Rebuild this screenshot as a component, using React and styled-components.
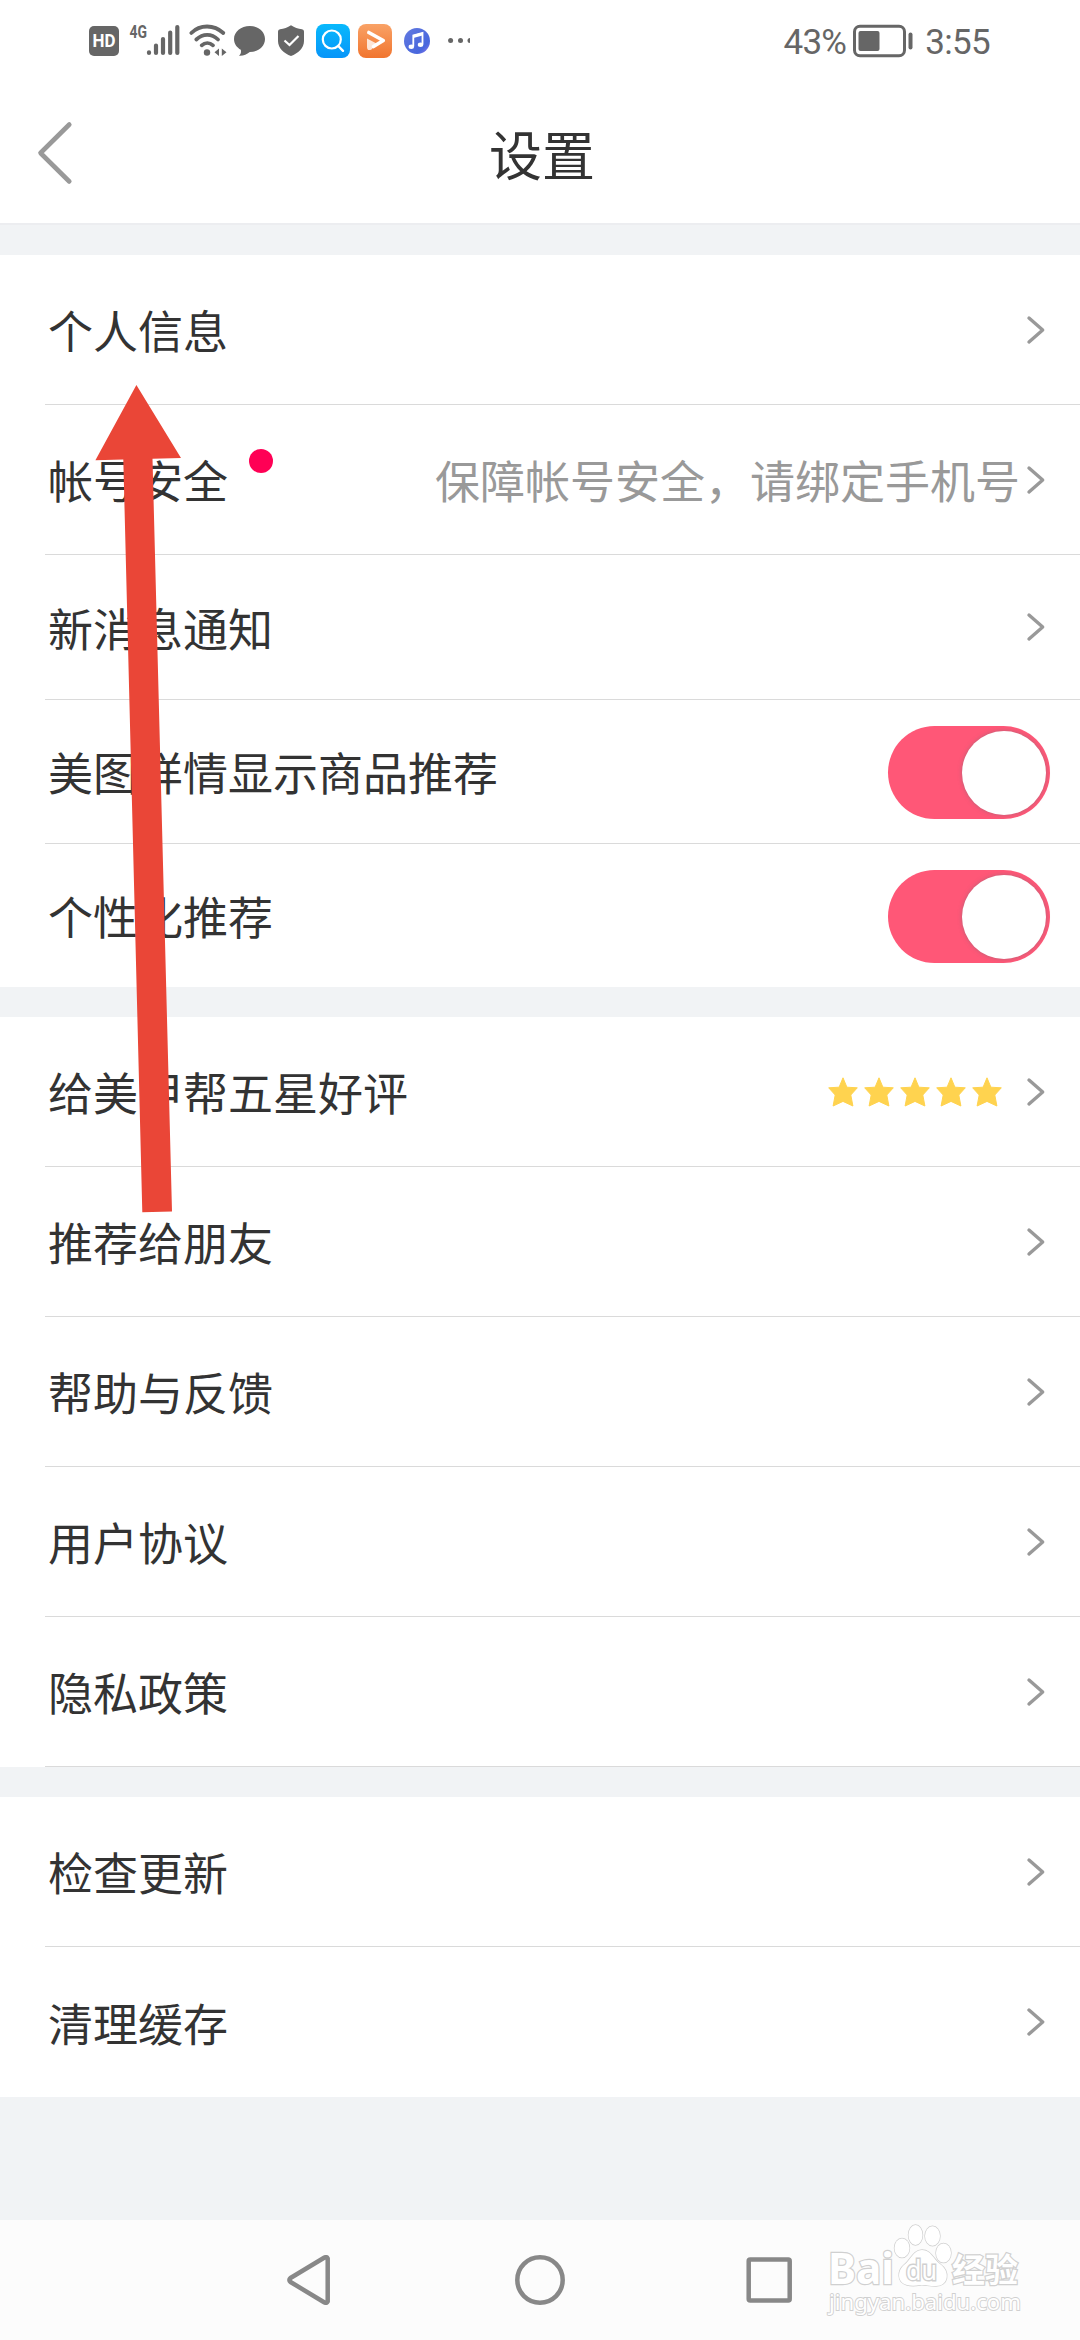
import React, { useState } from 'react';
import styled, { createGlobalStyle } from 'styled-components';

const GlobalStyle = createGlobalStyle`
  * {
    box-sizing: border-box;
  }

  body {
    margin: 0;
    background: #f1f3f5;
    font-family: "Noto Sans CJK SC", sans-serif;
    color: #333;
  }
`;

const Screen = styled.div`
  position: relative;
  display: flex;
  flex-direction: column;
  width: 1080px;
  height: 2340px;
  overflow: hidden;
  background: #f1f3f5;
`;

const StatusBar = styled.div`
  display: flex;
  justify-content: space-between;
  flex: none;
  height: 82px;
  padding: 0 90px 0 89px;
  background: #fff;
  color: #666;
`;

const StatusGroup = styled.div`
  display: flex;
  align-items: center;
  height: 82px;
`;

const StatusIcon = styled.svg`
  display: block;
  flex: none;
  width: ${props => props.width}px;
  height: ${props => props.height || 34}px;
  margin-left: ${props => props.$gap || 0}px;
  overflow: visible;
`;

const StatusText = styled.span`
  font-family: Roboto, sans-serif;
  font-size: 35px;
  line-height: 41px;
  letter-spacing: -0.7px;
  padding-top: 2px;
`;

const Header = styled.header`
  display: grid;
  grid-template-columns: 140px 1fr 140px;
  align-items: center;
  flex: none;
  height: 143px;
  background: #fff;
  border-bottom: 2px solid #ecedf0;
`;

const BackButton = styled.button`
  display: flex;
  padding: 0 0 0 36px;
  border: none;
  background: none;
  cursor: pointer;
`;

const Title = styled.h1`
  margin: 0;
  padding-left: 4px;
  font-size: 53px;
  font-weight: 400;
  line-height: 78px;
  text-align: center;
`;

const List = styled.main`
  display: flex;
  flex-direction: column;
  gap: 30px;
  flex: 1;
  padding-top: 30px;
`;

const Section = styled.section`
  background: #fff;
`;

const Row = styled.div`
  display: flex;
  align-items: center;
  height: ${props => props.$height || 150}px;
  margin-left: 45px;
  padding: 0 30px 0 3px;
  border-bottom: ${props => (props.$divider ? '1px solid #dadada' : 'none')};
`;

const Label = styled.span`
  font-size: 45px;
  line-height: 66px;
  padding-top: 1px;
`;

const RedDot = styled.i`
  width: 24px;
  height: 24px;
  margin: 0 0 37px 21px;
  border-radius: 50%;
  background: #ff0055;
`;

const RowEnd = styled.div`
  display: flex;
  align-items: center;
  margin-left: auto;
`;

const Hint = styled(Label)`
  color: #999;
  margin-right: 6px;
`;

const Stars = styled.div`
  display: flex;
  gap: 6px;
  margin: 1px 24px 0 0;
`;

const ArrowIcon = styled.svg`
  display: block;
  width: 20px;
  height: 30px;
  margin-right: 4px;
`;

const Switch = styled.button`
  display: flex;
  justify-content: ${props => (props.$on ? 'flex-end' : 'flex-start')};
  align-items: center;
  width: 162px;
  height: 93px;
  margin-top: 2px;
  padding: 0 4px;
  border: none;
  border-radius: 47px;
  background: ${props => (props.$on ? '#ff5777' : '#ddd')};
  cursor: pointer;
`;

const Knob = styled.span`
  width: 84px;
  height: 84px;
  border-radius: 50%;
  background: #fff;
  box-shadow: 0 0 4px rgba(120, 110, 120, 0.55);
`;

const NavBar = styled.nav`
  position: relative;
  display: flex;
  justify-content: center;
  align-items: center;
  gap: 180px;
  flex: none;
  height: 120px;
  background: #fcfcfc;
`;

const NavIcon = styled.svg`
  display: block;
  width: 50px;
  height: 50px;
  fill: none;
  stroke: #888;
  stroke-width: 4.5;
  stroke-linejoin: round;
`;

const Watermark = styled.svg`
  position: absolute;
  left: 820px;
  top: 0;
  width: 210px;
  height: 110px;
  font-family: "Noto Sans", "Noto Sans CJK SC", sans-serif;
`;

const Pointer = styled.svg`
  position: absolute;
  left: 90px;
  top: 380px;
  width: 96px;
  height: 840px;
  pointer-events: none;
`;

const sections = [
  [
    { label: '个人信息' },
    { label: '帐号安全', dot: true, hint: '保障帐号安全，请绑定手机号' },
    { label: '新消息通知', height: 145 },
    { label: '美图详情显示商品推荐', height: 144, toggle: true },
    { label: '个性化推荐', height: 143, toggle: true, last: true },
  ],
  [
    { label: '给美甲帮五星好评', stars: 5 },
    { label: '推荐给朋友' },
    { label: '帮助与反馈' },
    { label: '用户协议' },
    { label: '隐私政策' },
  ],
  [{ label: '检查更新' }, { label: '清理缓存', last: true }],
];

function Chevron() {
  return (
    <ArrowIcon viewBox="0 0 20 30" fill="none" stroke="#999" strokeWidth="3.4" strokeLinecap="round">
      <path d="M3 3 16.700 15 3 27" strokeLinejoin="round" />
    </ArrowIcon>
  );
}

function Star() {
  return (
    <svg width="30" height="30" viewBox="0 0 30 30" fill="#ffd34f">
      <path
        d="M15 .8 18.900 10.200 29.300 10.800 22.800 18 24.900 29 15 24.400 5.100 29 7.200 18 .7 10.800 11.100 10.200Z"
        stroke="#ffd34f"
        strokeWidth="1"
        strokeLinejoin="round"
      />
    </svg>
  );
}

function Toggle() {
  const [on, setOn] = useState(true);
  return (
    <Switch $on={on} role="switch" aria-checked={on} onClick={() => setOn(!on)}>
      <Knob />
    </Switch>
  );
}

function SettingRow({ item }) {
  return (
    <Row $height={item.height} $divider={!item.last}>
      <Label>{item.label}</Label>
      {item.dot && <RedDot />}
      <RowEnd>
        {item.hint && <Hint>{item.hint}</Hint>}
        {item.stars && (
          <Stars>
            {Array.from({ length: item.stars }, (_, i) => (
              <Star key={i} />
            ))}
          </Stars>
        )}
        {item.toggle ? <Toggle /> : <Chevron />}
      </RowEnd>
    </Row>
  );
}

function StatusIcons() {
  return (
    <StatusGroup>
      {/* HD badge */}
      <StatusIcon width={30} viewBox="0 0 30 34">
        <rect y="2" width="30" height="30" rx="5" fill="#666" />
        <text
          x="3.6"
          y="23.3"
          fill="#fff"
          fontFamily="Roboto"
          fontWeight="700"
          fontSize="18"
          textLength="23"
          lengthAdjust="spacingAndGlyphs"
        >
          HD
        </text>
      </StatusIcon>
      {/* 4G signal */}
      <StatusIcon width={52} $gap={10} viewBox="0 0 52 34">
        <text
          x="0.5"
          y="14"
          fill="#666"
          fontFamily="Roboto"
          fontWeight="700"
          fontSize="18"
          textLength="17.5"
          lengthAdjust="spacingAndGlyphs"
        >
          4G
        </text>
        <g stroke="#666" strokeWidth="4.2" strokeLinecap="round">
          <path d="M20 28.3v.7M27 21.5V29M34 15v14M41.200 8.500V29M48.300 3V29" />
        </g>
      </StatusIcon>
      {/* wifi */}
      <StatusIcon width={38} $gap={8} viewBox="0 0 38 34">
        <g fill="none" stroke="#666" strokeWidth="3.8" strokeLinecap="round">
          <path d="M2.300 9C11 .300 25 .300 34.300 9" />
          <path d="M7.300 15.500C14 9.300 22.500 9.300 29 15.500" />
          <path d="M12.700 21.300C16 18.300 20.600 18.300 24 21.300" />
        </g>
        <circle cx="18" cy="28.500" r="3.200" fill="#666" />
        <path d="M30 24.500V32L25.500 28.200ZM32.800 24.500 37.500 28.200 32.800 32Z" fill="#666" />
      </StatusIcon>
      {/* message bubble */}
      <StatusIcon width={32} $gap={7} viewBox="0 0 32 34">
        <path
          d="M15.800 2C24.500 2 31 7.800 31 15S24.500 28 15.800 28C12.500 30.500 9.500 32 5 31.700C7 30 7.200 28 6.800 25.800C3 23.500 0 20 0 15C0 7.800 7 2 15.800 2Z"
          fill="#666"
        />
      </StatusIcon>
      {/* shield */}
      <StatusIcon width={26} $gap={12} viewBox="0 0 26 34">
        <path
          d="M13 1.200C16.500 3.500 20 4.700 24 5.300Q26 5.700 26 7.500V17C26 24 20 29.500 13 32C6 29.500 0 24 0 17V7.500Q0 5.700 2 5.300C6 4.700 9.500 3.500 13 1.200Z"
          fill="#666"
        />
        <path d="M6.500 16.500 11.500 21 20.500 12" fill="none" stroke="#fff" strokeWidth="2.200" />
      </StatusIcon>
      {/* browser search */}
      <StatusIcon width={34} $gap={12} viewBox="0 0 34 34">
        <defs>
          <linearGradient id="blue" x1="0" y1="0" x2="0" y2="1">
            <stop offset="0" stopColor="#08b9fc" />
            <stop offset="1" stopColor="#0795f9" />
          </linearGradient>
        </defs>
        <rect width="34" height="34" rx="8" fill="url(#blue)" />
        <circle cx="15.800" cy="15.500" r="9" fill="none" stroke="#fff" strokeWidth="2.200" />
        <path d="M22.300 22 27 26.800" stroke="#fff" strokeWidth="2.400" strokeLinecap="round" />
      </StatusIcon>
      {/* video player */}
      <StatusIcon width={34} $gap={8} viewBox="0 0 34 34">
        <defs>
          <linearGradient id="orange" x1="0" y1="0" x2="0" y2="1">
            <stop offset="0" stopColor="#f9a266" />
            <stop offset="1" stopColor="#f1752f" />
          </linearGradient>
        </defs>
        <rect width="34" height="34" rx="8" fill="url(#orange)" />
        <path
          d="M10.800 8.500 25.300 16.500 15.500 22.500"
          fill="none"
          stroke="#fff"
          strokeWidth="3.600"
          strokeLinecap="round"
          strokeLinejoin="round"
        />
        <path d="M9 14.500 18.500 19.500 13.500 25.500Q9 27.500 9 23Z" fill="#fff" fillOpacity=".78" />
      </StatusIcon>
      {/* music */}
      <StatusIcon width={26} $gap={12} viewBox="0 0 26 34">
        <defs>
          <linearGradient id="violet" x1="0" y1="0" x2="1" y2="1">
            <stop offset="0" stopColor="#6279e0" />
            <stop offset=".75" stopColor="#4867dd" />
            <stop offset="1" stopColor="#9b7af2" />
          </linearGradient>
        </defs>
        <circle cx="13" cy="17" r="13" fill="url(#violet)" />
        <path d="M9.300 22.500V11.500L18.500 9V20.500" fill="none" stroke="#fff" strokeWidth="1.800" />
        <path d="M9.300 11 18.500 8.500V11.500L9.300 14Z" fill="#fff" />
        <ellipse cx="7.300" cy="22.800" rx="2.700" ry="2.200" fill="#fff" />
        <ellipse cx="16.500" cy="20.800" rx="2.700" ry="2.200" fill="#fff" />
      </StatusIcon>
      {/* overflow dots, the third one is cut by the edge */}
      <StatusIcon width={22} $gap={18} viewBox="0 0 22 34" fill="#666">
        <circle cx="2.600" cy="16.500" r="2.500" />
        <circle cx="12.500" cy="16.500" r="2.500" />
        <path d="M22 14A2.500 2.500 0 0 0 22 19Z" />
      </StatusIcon>
    </StatusGroup>
  );
}

function App() {
  return (
    <>
      <GlobalStyle />
      <Screen>
        <StatusBar>
          <StatusIcons />
          <StatusGroup>
            <StatusText>43%</StatusText>
            <StatusIcon width={60} $gap={7} viewBox="0 0 60 34">
              <rect x="1.500" y="2.200" width="50" height="29.500" rx="5.500" fill="none" stroke="#666" strokeWidth="3" />
              <rect x="5.500" y="7" width="21" height="20" rx="2" fill="#666" />
              <rect x="55.500" y="8.500" width="4" height="17" rx="2" fill="#666" />
            </StatusIcon>
            <StatusIcon width={12} />
            <StatusText>3:55</StatusText>
          </StatusGroup>
        </StatusBar>

        <Header>
          <BackButton aria-label="返回">
            <svg width="38" height="66" viewBox="0 0 38 66" fill="none" stroke="#999" strokeWidth="4.600">
              <path d="M33.300 4.500 4.500 33 33.300 61.500" strokeLinecap="round" strokeLinejoin="round" />
            </svg>
          </BackButton>
          <Title>设置</Title>
        </Header>

        <List>
          {sections.map((items, i) => (
            <Section key={i}>
              {items.map(item => (
                <SettingRow key={item.label} item={item} />
              ))}
            </Section>
          ))}
        </List>

        <NavBar>
          <NavIcon viewBox="0 0 50 50">
            <path d="M42.700 3.500V46.500Q41.700 48.500 39.500 47.500L5.500 27Q3.200 25 5.500 23L39.500 2.500Q41.700 1.500 42.700 3.500Z" />
          </NavIcon>
          <NavIcon viewBox="0 0 50 50">
            <circle cx="25" cy="25" r="22.700" />
          </NavIcon>
          <NavIcon viewBox="0 0 50 50">
            <rect x="3.700" y="4.500" width="41" height="41" rx="1.500" />
          </NavIcon>
          <Watermark viewBox="0 0 210 110" fill="#fff" stroke="#d0d0d0" strokeWidth="2.4" paintOrder="stroke">
            <text x="8" y="64" fontSize="43" fontWeight="700" textLength="66" lengthAdjust="spacingAndGlyphs">
              Bai
            </text>
            <g strokeWidth="1.400">
              <ellipse cx="82" cy="28" rx="7.500" ry="9.500" />
              <ellipse cx="95.500" cy="15" rx="7" ry="10" />
              <ellipse cx="112.500" cy="16" rx="7.500" ry="9.700" />
              <ellipse cx="123.500" cy="33" rx="7.500" ry="9.500" />
              <path d="M102 30C111 30 113 39 120 44C131 52 128 66 116 66C108 66 105 64.500 100 65C95 66 91 66 87 65C76 62 78 50 84 45C91 40 93 30 102 30Z" />
            </g>
            <text x="86" y="60" fontSize="27" strokeWidth="3" textLength="31" lengthAdjust="spacingAndGlyphs">
              du
            </text>
            <text x="132" y="62" fontSize="33" fontWeight="700" fontFamily="Noto Sans CJK SC" textLength="66">
              经验
            </text>
            <text x="9" y="90" fontSize="22" strokeWidth="1.800" textLength="192" lengthAdjust="spacingAndGlyphs">
              jingyan.baidu.com
            </text>
          </Watermark>
        </NavBar>

        <Pointer viewBox="90 380 96 840" fill="#ea4637">
          <path d="M136.400 385 181 458 152.500 458.700 172 1211.500 142.300 1212.300 123.300 459.500 95.400 460.300Z" />
        </Pointer>
      </Screen>
    </>
  );
}

export default App;
